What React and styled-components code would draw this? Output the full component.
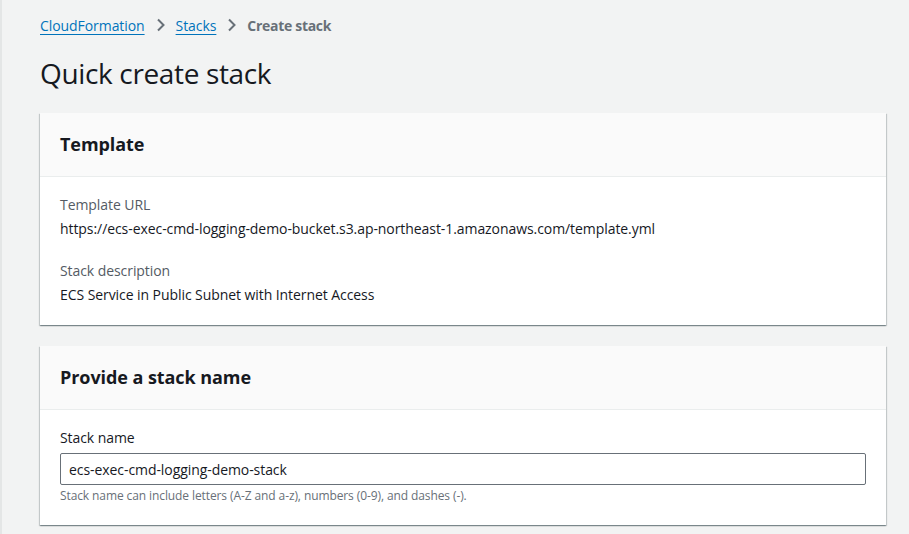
import React from "react";
import styled, { createGlobalStyle } from "styled-components";

const GlobalStyle = createGlobalStyle`
    html, body {
        margin: 0;
        padding: 0;
        background: #f2f3f3;
    }
    body {
        font-family: "Open Sans", "Noto Sans", sans-serif;
        color: #16191f;
        letter-spacing: -0.07px;
    }
`;

const Page = styled.div`
    min-height: 534px;
    box-sizing: border-box;
    border-left: 2px solid #e4e6e6;
    padding: 0 23px 0 38px;
`;

const Breadcrumbs = styled.nav`
    display: flex;
    align-items: center;
    height: 50px;
    font-size: 14px;
`;

const Crumb = styled.a`
    color: #0073bb;
    text-decoration: underline;
    text-underline-offset: 3px;
    cursor: pointer;
`;

const Current = styled.span`
    color: #687078;
    font-weight: 700;
    letter-spacing: -0.3px;
`;

const Sep = styled.span`
    display: flex;
    align-items: center;
    margin: 0 10px 0 11px;
`;

const Title = styled.h1`
    margin: 0;
    padding: 3px 0 0;
    font-size: 28px;
    font-weight: 400;
    line-height: 40px;
    letter-spacing: -0.35px;
    color: #16191f;
`;

const Stack = styled.div`
    display: flex;
    flex-direction: column;
    gap: 21px;
    margin-top: 20px;
`;

const Card = styled.section`
    background: #fff;
    box-shadow: 0 1px 1px 0 rgba(0, 28, 36, 0.3), 1px 1px 1px 0 rgba(0, 28, 36, 0.15),
        -1px 1px 1px 0 rgba(0, 28, 36, 0.15);
`;

const CardHeader = styled.header`
    display: flex;
    align-items: center;
    height: 63px;
    padding: 0 20px;
    background: #fafafa;
    border-bottom: 1px solid #eaeded;
    font-size: 18px;
    font-weight: 700;
    padding-bottom: 1px;
    box-sizing: border-box;
    height: 64px;
`;

const CardBody = styled.div`
    padding: ${props => props.pad || "18px 20px 20px"};
    display: flex;
    flex-direction: column;
    gap: ${props => props.gap || "22px"};
`;

const Field = styled.div`
    display: flex;
    flex-direction: column;
    gap: 4px;
    font-size: 14px;
    line-height: 20px;
`;

const Key = styled.div`
    color: ${props => props.dark ? "#16191f" : "#545b64"};
`;

const Value = styled.div`
    color: #16191f;
`;

const Input = styled.input`
    box-sizing: border-box;
    width: 100%;
    height: 32px;
    margin-top: 1px;
    padding: 4px 8px;
    border: 1px solid #687078;
    border-radius: 2px;
    font-family: inherit;
    font-size: 14px;
    letter-spacing: -0.07px;
    color: #16191f;
    outline: none;
`;

const Hint = styled.div`
    font-size: 12px;
    line-height: 16px;
    color: #687078;
    margin-top: 3px;
    letter-spacing: -0.1px;
`;

const Chevron = () => (
    <svg width="10" height="14" viewBox="0 0 10 14">
        <path d="M2 1.5 L7.5 7 L2 12.5" fill="none" stroke="#687078" strokeWidth="2" />
    </svg>
);

const App = () => {
    return (
        <Page>
            <GlobalStyle />
            <Breadcrumbs>
                <Crumb>CloudFormation</Crumb>
                <Sep><Chevron /></Sep>
                <Crumb>Stacks</Crumb>
                <Sep><Chevron /></Sep>
                <Current>Create stack</Current>
            </Breadcrumbs>
            <Title>Quick create stack</Title>
            <Stack>
                <Card>
                    <CardHeader>Template</CardHeader>
                    <CardBody>
                        <Field>
                            <Key>Template URL</Key>
                            <Value>https://ecs-exec-cmd-logging-demo-bucket.s3.ap-northeast-1.amazonaws.com/template.yml</Value>
                        </Field>
                        <Field>
                            <Key>Stack description</Key>
                            <Value>ECS Service in Public Subnet with Internet Access</Value>
                        </Field>
                    </CardBody>
                </Card>
                <Card>
                    <CardHeader>Provide a stack name</CardHeader>
                    <CardBody pad="18px 20px 21px" gap="0">
                        <Field>
                            <Key dark>Stack name</Key>
                            <Input defaultValue="ecs-exec-cmd-logging-demo-stack" />
                        </Field>
                        <Hint>Stack name can include letters (A-Z and a-z), numbers (0-9), and dashes (-).</Hint>
                    </CardBody>
                </Card>
            </Stack>
        </Page>
    );
};

export default App;
